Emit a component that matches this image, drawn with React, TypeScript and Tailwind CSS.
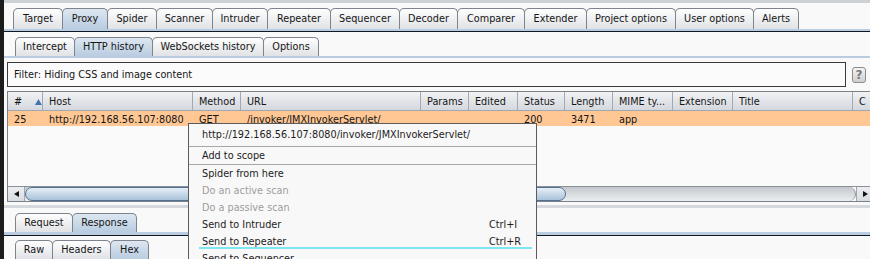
import clsx from 'clsx';

type Tab = { label: string; w: string; active?: boolean };

const topTabs: Tab[] = [
  { label: 'Target', w: 'w-[50px]' },
  { label: 'Proxy', w: 'w-[46px]', active: true },
  { label: 'Spider', w: 'w-[50px]' },
  { label: 'Scanner', w: 'w-[57px]' },
  { label: 'Intruder', w: 'w-[56px]' },
  { label: 'Repeater', w: 'w-[64px]' },
  { label: 'Sequencer', w: 'w-[70px]' },
  { label: 'Decoder', w: 'w-[59px]' },
  { label: 'Comparer', w: 'w-[68px]' },
  { label: 'Extender', w: 'w-[63px]' },
  { label: 'Project options', w: 'w-[90px]' },
  { label: 'User options', w: 'w-[79px]' },
  { label: 'Alerts', w: 'w-[46px]' },
];

const proxyTabs: Tab[] = [
  { label: 'Intercept', w: 'w-[60px]' },
  { label: 'HTTP history', w: 'w-[79px]', active: true },
  { label: 'WebSockets history', w: 'w-[112px]' },
  { label: 'Options', w: 'w-[56px]' },
];

const msgTabs: Tab[] = [
  { label: 'Request', w: 'w-[58px]' },
  { label: 'Response', w: 'w-[65px]', active: true },
];

const viewTabs: Tab[] = [
  { label: 'Raw', w: 'w-[38px]' },
  { label: 'Headers', w: 'w-[59px]' },
  { label: 'Hex', w: 'w-[39px]', active: true },
];

// header label, column width, row value
const columns = [
  { h: '#', w: 'w-[35px]', v: '25' },
  { h: 'Host', w: 'w-[150px]', v: 'http://192.168.56.107:8080' },
  { h: 'Method', w: 'w-[48px]', v: 'GET' },
  { h: 'URL', w: 'w-[180px]', v: '/invoker/JMXInvokerServlet/' },
  { h: 'Params', w: 'w-[48px]', v: '' },
  { h: 'Edited', w: 'w-[49px]', v: '' },
  { h: 'Status', w: 'w-[47px]', v: '200' },
  { h: 'Length', w: 'w-[48px]', v: '3471' },
  { h: 'MIME ty...', w: 'w-[60px]', v: 'app' },
  { h: 'Extension', w: 'w-[60px]', v: '' },
  { h: 'Title', w: 'w-[120px]', v: '' },
  { h: 'C', w: 'w-[20px]', v: '' },
];

const TabRow = ({ tabs, h, pl }: { tabs: Tab[]; h: string; pl: string }) => (
  <div className={clsx('flex', pl)}>
    {tabs.map((t) => (
      <div
        key={t.label}
        className={clsx(
          'flex items-center justify-center shrink-0 border border-b-0 border-[#7d848d] rounded-t-[5px] -ml-px first:ml-0 text-[#151515]',
          h,
          t.w,
          t.active
            ? 'bg-linear-to-b from-[#dde7f1] to-[#b9cce0]'
            : 'bg-linear-to-b from-[#fefefe] to-[#e0e2e5]'
        )}
      >
        {t.label}
      </div>
    ))}
  </div>
);

const MenuItem = ({ label, shortcut, disabled }: { label: string; shortcut?: string; disabled?: boolean }) => (
  <div className={clsx('h-[17px] flex items-center pl-[13px] pr-[14px]', disabled ? 'text-[#9d9d9d]' : 'text-[#1c1c1c]')}>
    <span className="flex-1">{label}</span>
    {shortcut && <span className="w-[33px]">{shortcut}</span>}
  </div>
);

export default function App() {
  return (
    <div className="relative w-[870px] h-[259px] overflow-hidden flex bg-[#f9f9f9] font-['DejaVu_Sans',sans-serif] text-[9.7px] leading-none">
      {/* window edge */}
      <div className="w-[4px] shrink-0 bg-[#1c1c1c]" />

      <div className="flex-1 flex flex-col">
        <div className="h-[3px] bg-[#cdd1d6]" />
        <div className="h-[5px]" />

        {/* main tabs */}
        <TabRow tabs={topTabs} h="h-[21px]" pl="pl-[9px]" />
        <div className="h-[2px] bg-[#b9cde2]" />
        <div className="h-px bg-[#0e1722]" />
        <div className="h-[5px]" />

        {/* proxy tabs */}
        <TabRow tabs={proxyTabs} h="h-[19px]" pl="pl-[11px]" />
        <div className="h-[3px] bg-[#b9cce0]" />
        <div className="h-[4px]" />

        {/* filter */}
        <div className="flex items-center pl-[3px]">
          <div className="w-[839px] h-[25px] border border-[#3a3a3a] bg-[#fbfbfb] flex items-center pl-[6px] pt-[1px] text-[#151515]">
            Filter: Hiding CSS and image content
          </div>
          <div className="ml-[6px] w-[14px] h-[16px] rounded-[3px] border border-[#8c8c8c] bg-linear-to-b from-[#f4f4f4] to-[#cfcfcf] flex items-center justify-center text-[12px] font-bold text-[#7a7a7a]">
            ?
          </div>
        </div>
        <div className="h-[4px]" />

        {/* history table */}
        <div className="ml-[3px] mr-[2px] h-[114px] border border-[#7b8189] flex flex-col bg-[#fafafa] overflow-hidden">
          <div className="flex h-[19px] shrink-0 bg-linear-to-b from-[#f1f2f4] to-[#d4d8de] border-b border-[#a2a8b0]">
            {columns.map((c, i) => (
              <div
                key={c.h}
                className={clsx('shrink-0 flex items-center pl-[6px] pt-[2px] border-r border-[#a2a8b0] text-[#151515]', c.w)}
              >
                {c.h}
                {i === 0 && (
                  <svg width="7" height="6" viewBox="0 0 7 6" className="ml-[13px]">
                    <path d="M3.5 0L7 6H0z" fill="#3f74ad" />
                  </svg>
                )}
              </div>
            ))}
          </div>
          <div className="flex h-[15px] shrink-0 bg-[#ffc794]">
            {columns.map((c) => (
              <div key={c.h} className={clsx('shrink-0 flex items-center pl-[6px] pt-[3px] text-[#151515] whitespace-nowrap overflow-hidden', c.w)}>
                {c.v}
              </div>
            ))}
          </div>
          <div className="flex-1" />

          {/* horizontal scrollbar */}
          <div className="h-[15px] shrink-0 flex border-t border-[#8a9098]">
            <div className="w-[17px] flex items-center justify-center bg-linear-to-b from-[#eceef0] to-[#d9dce0] border-r border-[#a0a6ad]">
              <svg width="5" height="6" viewBox="0 0 5 6">
                <path d="M0 3L5 0V6z" fill="#111" />
              </svg>
            </div>
            <div className="flex-1 flex bg-linear-to-b from-[#c3c7cd] to-[#eceef0] rounded-r-[8px] border-r border-[#8e959d]">
              <div className="w-[541px] h-full rounded-[8px] border border-[#52718f] bg-linear-to-b from-[#e6eef6] to-[#a9c3da]" />
            </div>
            <div className="w-[17px] flex items-center justify-center bg-linear-to-b from-[#eceef0] to-[#d9dce0] border-l border-[#a0a6ad]">
              <svg width="5" height="6" viewBox="0 0 5 6">
                <path d="M5 3L0 0V6z" fill="#111" />
              </svg>
            </div>
          </div>
        </div>

        <div className="h-[3px]" />
        <div className="h-[4px] mr-[2px] bg-[#d5d8dd]" />
        <div className="h-[5px]" />

        {/* message tabs */}
        <TabRow tabs={msgTabs} h="h-[19px]" pl="pl-[11px]" />
        <div className="h-[3px] bg-[#b9cce0]" />
        <div className="h-px bg-[#0e1722]" />
        <div className="h-[4px]" />
        <TabRow tabs={viewTabs} h="h-[19px]" pl="pl-[11px]" />
      </div>

      {/* context menu */}
      <div className="absolute left-[188px] top-[123px] w-[349px] h-[150px] border border-[#5b5b5b] bg-[#f8f8f8]">
        <div className="h-[22px] flex items-center pl-[13px] text-[#1c1c1c]">
          http://192.168.56.107:8080/invoker/JMXInvokerServlet/
        </div>
        <div className="h-px bg-[#a6a6a6]" />
        <MenuItem label="Add to scope" />
        <div className="h-px bg-[#a6a6a6]" />
        <MenuItem label="Spider from here" />
        <MenuItem label="Do an active scan" disabled />
        <MenuItem label="Do a passive scan" disabled />
        <MenuItem label="Send to Intruder" shortcut="Ctrl+I" />
        <div className="relative">
          <MenuItem label="Send to Repeater" shortcut="Ctrl+R" />
          <div className="absolute left-[10px] right-[4px] top-[14px] h-[2px] bg-[#7fe6f4]" />
        </div>
        <MenuItem label="Send to Sequencer" />
      </div>
    </div>
  );
}
